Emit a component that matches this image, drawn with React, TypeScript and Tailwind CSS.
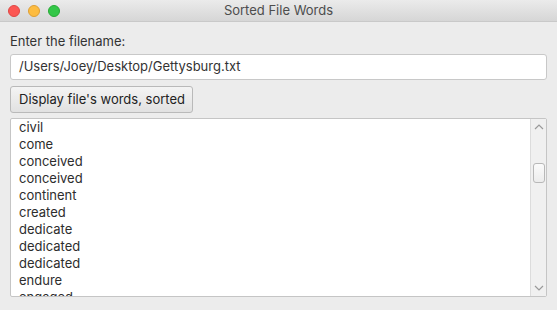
const words = [
  "civil",
  "come",
  "conceived",
  "conceived",
  "continent",
  "created",
  "dedicate",
  "dedicated",
  "dedicated",
  "endure",
  "engaged",
]

function TrafficLights() {
  return (
    <div className="flex items-center gap-[8px] pl-[8px]">
      <span className="h-[12px] w-[12px] rounded-full bg-[#fc5753] border border-[#df4744]" />
      <span className="h-[12px] w-[12px] rounded-full bg-[#fdbc40] border border-[#de9f34]" />
      <span className="h-[12px] w-[12px] rounded-full bg-[#33c748] border border-[#27aa35]" />
    </div>
  )
}

function Chevron({ up }: { up?: boolean }) {
  return (
    <svg width="10" height="6" viewBox="0 0 10 6" className="text-[#9a9a9a]">
      <path d={up ? "M1 5 L5 1 L9 5" : "M1 1 L5 5 L9 1"} fill="none" stroke="currentColor" strokeWidth="1.2" />
    </svg>
  )
}

export default function App() {
  return (
    <div
      className="flex h-[310px] w-[557px] flex-col overflow-hidden bg-[#ececec] text-[13px] text-[#333]"
      style={{ fontFamily: 'Inter, "Liberation Sans", Arial, sans-serif' }}
    >
      <div className="relative flex h-[22px] shrink-0 items-center border-b border-[#c9c9c9] bg-gradient-to-b from-[#ebebeb] to-[#d6d6d6]">
        <TrafficLights />
        <div className="absolute inset-0 flex items-center justify-center text-[13px] text-[#4d4d4d]">
          Sorted File Words
        </div>
      </div>

      <div className="flex flex-col px-[10px] pt-[10px]">
        <div className="h-[18px] leading-[18px]">Enter the filename:</div>
        <div className="mt-[4px] flex h-[26px] items-center rounded-[3px] border border-[#c8c8c8] bg-white pl-[8px]">
          /Users/Joey/Desktop/Gettysburg.txt
        </div>
        <button className="mt-[6px] flex h-[27px] w-[183px] items-center rounded-[3px] border border-[#b9b9b9] bg-gradient-to-b from-[#f4f4f4] to-[#e1e1e1] pl-[8px] text-[#222]">
          Display file's words, sorted
        </button>
        <div className="mt-[5px] flex h-[179px] rounded-[2px] border border-[#c5c5c5] bg-white">
          <div className="min-w-0 flex-1 overflow-hidden pl-[8px]">
            {words.map((w, i) => (
              <div key={i} className="h-[17px] leading-[17px] text-[#2d2d2d]">
                {w}
              </div>
            ))}
          </div>
          <div className="flex w-[16px] flex-col items-center border-l border-[#dcdcdc] bg-[#f0f0f0]">
            <div className="flex h-[14px] items-center pt-[2px]">
              <Chevron up />
            </div>
            <div className="mt-[30px] h-[20px] w-[12px] rounded-[3px] border border-[#b8b8b8] bg-gradient-to-b from-[#fbfbfb] to-[#ececec]" />
            <div className="flex-1" />
            <div className="flex h-[14px] items-center pb-[2px]">
              <Chevron />
            </div>
          </div>
        </div>
      </div>
    </div>
  )
}
